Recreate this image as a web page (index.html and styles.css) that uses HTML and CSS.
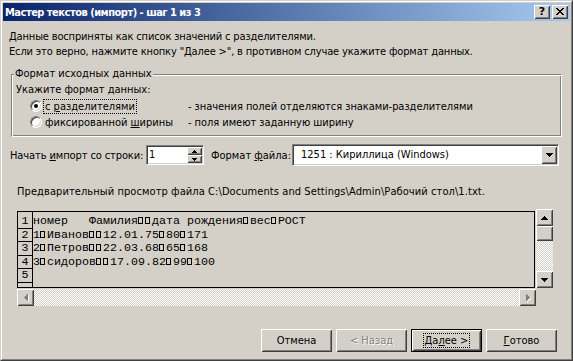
FILE: index.html
```html
<!DOCTYPE html>
<html>
<head>
<meta charset="utf-8">
<link rel="stylesheet" href="styles.css">
</head>
<body>
<div class="win">
  <div class="win-in">
    <div class="title">
      <span class="title-text">Мастер текстов (импорт) - шаг 1 из 3</span>
      <div class="cap-btns">
        <span class="cbtn help">?</span>
        <span class="cbtn"><svg width="8" height="7" viewBox="0 0 8 7"><path d="M0 0h2v1h-2z M6 0h2v1h-2z M1 1h2v1h-2z M5 1h2v1h-2z M2 2h4v1h-4z M3 3h2v1h-2z M2 4h4v1h-4z M1 5h2v1h-2z M5 5h2v1h-2z M0 6h2v1h-2z M6 6h2v1h-2z" fill="#000"/></svg></span>
      </div>
    </div>
    <div class="content">
      <p class="intro">Данные восприняты как список значений с разделителями.<br>Если это верно, нажмите кнопку "Далее &gt;", в противном случае укажите формат данных.</p>
      <div class="grp">
        <span class="grp-label">Формат исходных данных</span>
        <div class="grp-title">Укажите формат данных:</div>
        <div class="opt">
          <span class="radio on"></span>
          <span class="opt-label"><span class="focus">с <u>р</u>азделителями</span></span>
          <span class="opt-desc">- значения полей отделяются знаками-разделителями</span>
        </div>
        <div class="opt">
          <span class="radio"></span>
          <span class="opt-label"><span class="nofocus">фиксированной <u>ш</u>ирины</span></span>
          <span class="opt-desc">- поля имеют заданную ширину</span>
        </div>
      </div>
      <div class="row">
        <span class="lbl lbl-start">Начать <u>и</u>мпорт со строки:</span>
        <div class="spin">
          <span class="spin-val">1</span>
          <div class="spin-btns">
            <span class="sbtn"><svg width="5" height="3" viewBox="0 0 5 3"><path d="M2 0h1v1h-1z M1 1h3v1h-3z M0 2h5v1h-5z" fill="#000"/></svg></span>
            <span class="sbtn"><svg width="5" height="3" viewBox="0 0 5 3"><path d="M0 0h5v1h-5z M1 1h3v1h-3z M2 2h1v1h-1z" fill="#000"/></svg></span>
          </div>
        </div>
        <span class="lbl lbl-fmt">Формат <u>ф</u>айла:</span>
        <div class="combo">
          <span class="combo-val">1251 : Кириллица (Windows)</span>
          <span class="combo-btn"><svg width="7" height="4" viewBox="0 0 7 4"><path d="M0 0h7v1h-7z M1 1h5v1h-5z M2 2h3v1h-3z M3 3h1v1h-1z" fill="#000"/></svg></span>
        </div>
      </div>
      <div class="prev-label">Предварительный просмотр файла C:\Documents and Settings\Admin\Рабочий стол\1.txt.</div>
      <div class="preview">
        <div class="pv-left">
          <div class="pv-box">
            <div class="nums">
              <div class="num">1</div>
              <div class="num">2</div>
              <div class="num">3</div>
              <div class="num">4</div>
              <div class="num">5</div>
            </div>
            <div class="lines">
              <div class="line">номер   Фамилия<span class="tb"></span><span class="tb"></span>дата рождения<span class="tb"></span>вес<span class="tb"></span>РОСТ</div>
              <div class="line">1<span class="tb"></span>Иванов<span class="tb"></span><span class="tb"></span>12.01.75<span class="tb"></span>80<span class="tb"></span>171</div>
              <div class="line">2<span class="tb"></span>Петров<span class="tb"></span><span class="tb"></span>22.03.68<span class="tb"></span>65<span class="tb"></span>168</div>
              <div class="line">3<span class="tb"></span>сидоров<span class="tb"></span><span class="tb"></span>17.09.82<span class="tb"></span>99<span class="tb"></span>100</div>
              <div class="line"></div>
            </div>
          </div>
          <div class="hscroll">
            <span class="sb-btn"><svg width="5" height="8" viewBox="0 0 5 8"><path d="M4 1h1v7h-1z M3 5h1v2h-1z M2 4h1v2h-1z" fill="#fff"/><path d="M3 0h1v7h-1z M2 1h1v5h-1z M1 2h1v3h-1z M0 3h1v1h-1z" fill="#808080"/></svg></span>
            <span class="track"></span>
            <span class="sb-btn"><svg width="5" height="8" viewBox="0 0 5 8"><path d="M1 7h1v1h-1z M2 6h1v1h-1z M3 5h1v1h-1z M4 4h1v1h-1z" fill="#fff"/><path d="M0 0h1v7h-1z M1 1h1v5h-1z M2 2h1v3h-1z M3 3h1v1h-1z" fill="#808080"/></svg></span>
          </div>
        </div>
        <div class="vscroll">
          <span class="sb-btn"><svg width="7" height="4" viewBox="0 0 7 4"><path d="M3 0h1v1h-1z M2 1h3v1h-3z M1 2h5v1h-5z M0 3h7v1h-7z" fill="#000"/></svg></span>
          <span class="thumb"></span>
          <span class="track"></span>
          <span class="sb-btn"><svg width="7" height="4" viewBox="0 0 7 4"><path d="M0 0h7v1h-7z M1 1h5v1h-5z M2 2h3v1h-3z M3 3h1v1h-1z" fill="#000"/></svg></span>
        </div>
      </div>
      <div class="buttons">
        <span class="btn">Отмена</span>
        <span class="btn disabled">&lt; Назад</span>
        <span class="btn default"><span class="focus">Да<u>л</u>ее &gt;</span></span>
        <span class="btn"><span><u>Г</u>отово</span></span>
      </div>
    </div>
  </div>
</div>
</body>
</html>
```

FILE: styles.css
```css
html, body {
  margin: 0;
  padding: 0;
  background: #D4D0C8;
}
body {
  font-family: "DejaVu Sans Condensed", "Liberation Sans", sans-serif;
  font-size: 11px;
  color: #000;
}
u {
  text-decoration: underline;
  text-underline-offset: 1px;
}
.win {
  width: 573px;
  height: 361px;
  box-sizing: border-box;
  border: 1px solid;
  border-color: #D4D0C8 #404040 #404040 #D4D0C8;
  background: #D4D0C8;
}
.win-in {
  height: 100%;
  box-sizing: border-box;
  border: 1px solid;
  border-color: #fff #808080 #808080 #fff;
  padding: 1px;
  display: flex;
  flex-direction: column;
}
.title {
  height: 18px;
  flex: none;
  background: linear-gradient(to right, #0A246A, #A6CAF0);
  display: flex;
  align-items: center;
  padding-left: 2px;
}
.title-text {
  color: #fff;
  font-weight: bold;
  font-size: 11px;
  letter-spacing: -0.5px;
  white-space: nowrap;
  flex: 1;
}
.cap-btns {
  display: flex;
  gap: 2px;
  margin-right: 2px;
}
.cbtn {
  width: 16px;
  height: 14px;
  box-sizing: border-box;
  background: #D4D0C8;
  box-shadow: inset 1px 1px #fff, inset -1px -1px #404040, inset 2px 2px #D4D0C8, inset -2px -2px #808080;
  display: flex;
  align-items: center;
  justify-content: center;
}
.cbtn svg { display: block; margin-top: -1px; }
.cbtn.help {
  font-family: "DejaVu Sans", sans-serif;
  font-weight: bold;
  font-size: 11px;
  line-height: 14px;
  padding-bottom: 1px;
}
.content {
  flex: 1;
  padding: 0 6px;
  display: flex;
  flex-direction: column;
}
.intro {
  margin: 8px 0 0 0;
  line-height: 15px;
  letter-spacing: -0.15px;
  white-space: nowrap;
}
.grp {
  position: relative;
  margin: 15px 0 0 2px;
  width: 551px;
  box-sizing: border-box;
  border: 1px solid;
  border-color: #808080 #fff #fff #808080;
  box-shadow: inset 1px 1px #fff, inset -1px -1px #808080;
  padding: 7px 0 6px 4px;
}
.grp-label {
  position: absolute;
  left: 2px;
  top: -8px;
  line-height: 13px;
  padding: 0 1px;
  background: #D4D0C8;
}
.grp-title {
  line-height: 14px;
  padding-top: 1px;
  height: 14px;
  box-sizing: border-box;
}
.opt {
  display: flex;
  align-items: center;
  height: 16px;
}
.grp-title + .opt { margin-top: 2px; }
.radio {
  width: 12px;
  height: 12px;
  box-sizing: border-box;
  border-radius: 50%;
  border: 1px solid;
  border-color: #808080 #fff #fff #808080;
  background: #fff;
  box-shadow: inset 1px 1px #404040, inset -1px -1px #D4D0C8;
  margin-left: 14px;
  display: flex;
  align-items: center;
  justify-content: center;
  flex: none;
}
.radio.on::after {
  content: "";
  width: 4px;
  height: 4px;
  border-radius: 50%;
  background: #000;
}
.opt-label {
  width: 144px;
  margin-left: 2px;
  flex: none;
  white-space: nowrap;
}
.focus {
  outline: 1px dotted #000;
  padding: 0 1px;
  line-height: 13px;
  display: inline-block;
}
.nofocus {
  padding: 0 1px;
}
.opt-desc {
  white-space: nowrap;
  letter-spacing: -0.05px;
}
.row {
  display: flex;
  align-items: center;
  height: 22px;
  margin-top: 7px;
}
.lbl { white-space: nowrap; flex: none; }
.lbl-start { width: 137px; padding-left: 1px; box-sizing: border-box; letter-spacing: -0.1px; }
.lbl-fmt { width: 88px; padding-left: 7px; box-sizing: border-box; }
.spin, .combo {
  box-sizing: border-box;
  border: 1px solid;
  border-color: #808080 #fff #fff #808080;
  box-shadow: inset 1px 1px #404040, inset -1px -1px #D4D0C8;
  background: #fff;
  display: flex;
  align-items: stretch;
  padding: 1px;
  flex: none;
}
.spin { width: 58px; height: 20px; }
.spin-val { flex: 1; padding-left: 1px; line-height: 16px; }
.spin-btns { display: flex; flex-direction: column; width: 15px; }
.sbtn, .combo-btn, .sb-btn, .thumb, .btn {
  background: #D4D0C8;
  box-shadow: inset 1px 1px #fff, inset -1px -1px #404040, inset 2px 2px #D4D0C8, inset -2px -2px #808080;
  display: flex;
  align-items: center;
  justify-content: center;
  box-sizing: border-box;
}
.sbtn { height: 8px; }
.sbtn svg { display: block; }
.combo { width: 267px; height: 22px; }
.combo-val { flex: 1; padding-left: 7px; line-height: 18px; white-space: nowrap; }
.combo-btn { width: 16px; flex: none; }
.combo-btn svg, .sb-btn svg { display: block; }
.prev-label {
  margin: 19px 0 0 8px;
  line-height: 13px;
  letter-spacing: 0.08px;
  white-space: nowrap;
}
.preview {
  display: flex;
  align-items: flex-start;
  margin: 11px 0 0 8px;
}
.pv-left {
  width: 519px;
  margin-top: 2px;
  display: flex;
  flex-direction: column;
  gap: 1px;
}
.pv-box {
  width: 518px;
  height: 77px;
  box-sizing: border-box;
  border: 1px solid #000;
  display: flex;
  overflow: hidden;
}
.nums {
  width: 15px;
  border-right: 1px solid #000;
  box-sizing: border-box;
  padding-top: 3px;
  flex: none;
}
.lines { padding-top: 3px; }
.num, .line {
  height: 14px;
  box-sizing: border-box;
  font-family: "Liberation Mono", "DejaVu Sans Mono", monospace;
  font-size: 11.66px;
  line-height: 13px;
}
.num:nth-child(even), .line:nth-child(even) { height: 13px; line-height: 12px; }
.num {
  border-bottom: 1px solid #000;
  text-align: center;
}
.line { white-space: pre; }
.tb {
  display: inline-block;
  width: 5px;
  height: 7px;
  box-sizing: border-box;
  border: 1px solid #000;
  margin-right: 2px;
}
.hscroll {
  display: flex;
  height: 17px;
}
.hscroll .sb-btn { width: 17px; flex: none; }
.hscroll .sb-btn svg { margin-left: 1px; }
.track {
  flex: 1;
  background: repeating-conic-gradient(#fff 0 25%, #D4D0C8 0 50%) 0 0 / 2px 2px;
}
.vscroll {
  width: 17px;
  height: 79px;
  display: flex;
  flex-direction: column;
}
.vscroll .sb-btn { height: 17px; flex: none; }
.vscroll .thumb { height: 15px; flex: none; }
.buttons {
  display: flex;
  justify-content: flex-end;
  gap: 4px;
  margin-top: 23px;
  padding-right: 7px;
}
.btn {
  width: 71px;
  height: 23px;
  white-space: nowrap;
}
.btn.disabled {
  color: #808080;
  text-shadow: 1px 1px #fff;
}
.btn.default {
  box-shadow: inset 0 0 0 1px #000, inset 2px 2px #fff, inset -2px -2px #404040, inset 3px 3px #D4D0C8, inset -3px -3px #808080;
}
.btn .focus { line-height: 13px; }
```
